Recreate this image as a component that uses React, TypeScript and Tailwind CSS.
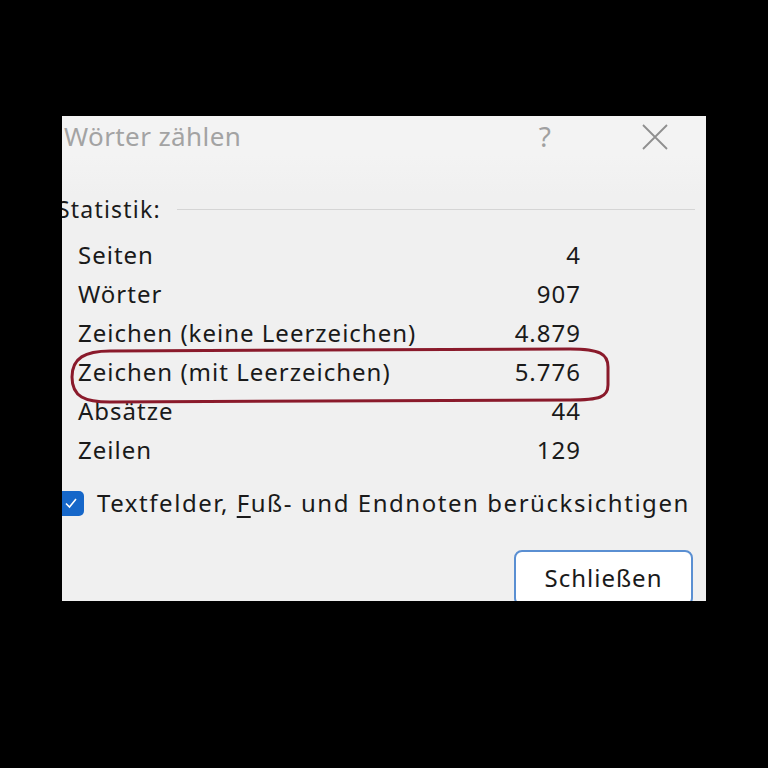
import React from 'react'

const rows = [
  { label: 'Seiten', value: '4' },
  { label: 'Wörter', value: '907' },
  { label: 'Zeichen (keine Leerzeichen)', value: '4.879' },
  { label: 'Zeichen (mit Leerzeichen)', value: '5.776' },
  { label: 'Absätze', value: '44' },
  { label: 'Zeilen', value: '129' },
]

export default function App() {
  return (
    <div
      className="w-[768px] h-[768px] bg-black pt-[116px] pl-[62px]"
      style={{ fontFamily: '"Noto Sans", "Open Sans", sans-serif' }}
    >
      <div className="relative w-[644px] h-[485px] bg-[#f0f0f0] overflow-hidden">
        {/* title bar */}
        <div className="h-[40px] bg-[#f3f3f3] flex items-center">
          <span className="pl-[2px] text-[26px] tracking-[0.4px] text-[#a3a3a3] leading-none">Wörter zählen</span>
          <span className="ml-auto mr-[155px] text-[28px] text-[#a0a0a0] leading-none">?</span>
        </div>
        <svg className="absolute left-[580px] top-[8px]" width="26" height="26" viewBox="0 0 26 26">
          <path d="M1 1 L25 25 M25 1 L1 25" stroke="#8f8f8f" strokeWidth="1.8" fill="none" />
        </svg>
        <div className="h-[38px] bg-gradient-to-b from-[#f3f3f3] to-[#f0f0f0]" />

        {/* Statistik header */}
        <div className="flex items-center h-[30px] -ml-[5px]">
          <span className="text-[23px] tracking-[1.2px] text-[#1b1b1b] leading-none">Statistik:</span>
          <div className="ml-[16px] mr-[11px] flex-1 h-px bg-[#d5d5d5]" />
        </div>

        {/* rows */}
        <div className="mt-[11px] pl-[16px] w-[518px]">
          {rows.map(r => (
            <div
              key={r.label}
              className="flex items-center justify-between h-[39px] text-[24px] tracking-[1px] text-[#1a1a1a]"
            >
              <span>{r.label}</span>
              <span className="-mr-[1px]">{r.value}</span>
            </div>
          ))}
        </div>

        {/* checkbox */}
        <div className="mt-[20px] flex items-center h-[28px] -ml-[4px]">
          <div className="w-[26px] h-[25px] rounded-[5px] bg-[#1667c9] flex items-center justify-center">
            <svg width="14" height="12" viewBox="0 0 14 12">
              <path d="M2 6.5 L5.5 10 L12 2" stroke="#ffffff" strokeWidth="1.6" fill="none" />
            </svg>
          </div>
          <span className="ml-[13px] text-[24px] tracking-[1.55px] text-[#1a1a1a] leading-none whitespace-nowrap">
            Textfelder, <span className="underline underline-offset-4">F</span>uß- und Endnoten berücksichtigen
          </span>
        </div>

        {/* button */}
        <div className="mt-[33px] flex justify-end pr-[13px]">
          <div className="w-[179px] h-[56px] bg-white border-2 border-[#5a8fd2] rounded-[8px] flex justify-center pt-[8px] text-[24px] tracking-[1px] text-[#1a1a1a]">
            Schließen
          </div>
        </div>

        {/* annotation */}
        <svg className="absolute left-[8px] top-[231px]" width="542" height="58" viewBox="0 0 542 58">
          <path
            d="M40 4 L500 2 C530 2 538 7 538 20 L538 38 C538 50 530 53 500 53 L40 55 C15 55 2 50 2 30 C2 11 15 4 40 4 Z"
            stroke="#8a1a2b"
            strokeWidth="3"
            fill="none"
          />
        </svg>
      </div>
    </div>
  )
}
